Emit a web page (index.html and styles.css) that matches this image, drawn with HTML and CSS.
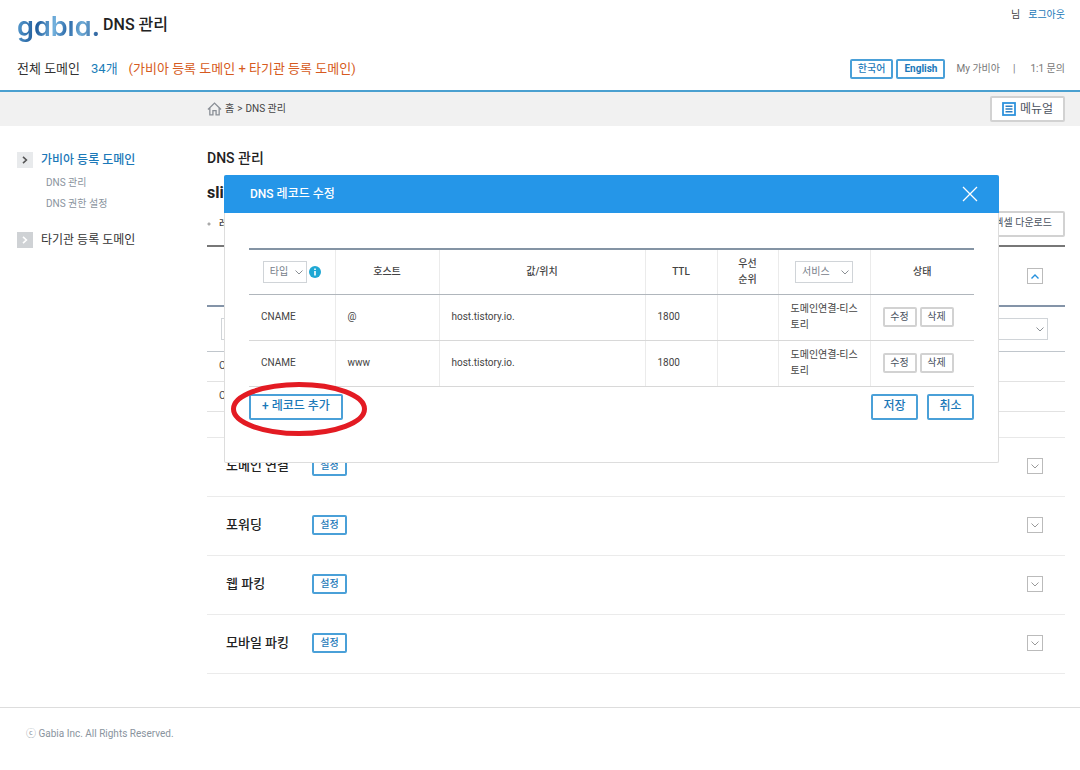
FILE: index.html
```html
<!DOCTYPE html>
<html lang="ko">
<head>
  <meta charset="UTF-8" />
  <meta name="viewport" content="width=device-width, initial-scale=1.0">
  <title>DNS 관리</title>
  <link rel="stylesheet" href="styles.css">
</head>
<body>

  <!-- Shared icons -->
  <svg class="icon-defs" aria-hidden="true">
    <symbol id="chevron-down" viewBox="0 0 8 5"><path d="M0.5 0.5 L4 4 L7.5 0.5" fill="none" stroke="currentColor" /></symbol>
    <symbol id="chevron-up" viewBox="0 0 8 5"><path d="M0.5 4.5 L4 1 L7.5 4.5" fill="none" stroke="currentColor" stroke-width="1.4" /></symbol>
    <symbol id="chevron-right" viewBox="0 0 6 8"><path d="M1 0.8 L4.4 4 L1 7.2" fill="none" stroke="currentColor" stroke-width="1.6" /></symbol>
  </svg>

  <header id="header">
    <div class="header-row header-top">
      <div class="brand">
        <a class="logo" href="#" aria-label="gabia">gabıa.</a>
        <h1>DNS 관리</h1>
      </div>
      <div class="user">
        <span>님</span>
        <a href="#">로그아웃</a>
      </div>
    </div>
    <div class="header-row header-bottom">
      <p class="summary">
        <span>전체 도메인</span>
        <span class="count">34개</span>
        <span class="detail">(가비아 등록 도메인 + 타기관 등록 도메인)</span>
      </p>
      <div class="header-links">
        <button class="btn btn-blue btn-lang" type="button">한국어</button>
        <button class="btn btn-blue btn-lang" type="button"><b>English</b></button>
        <a href="#">My 가비아</a>
        <span class="divider">|</span>
        <a href="#">1:1 문의</a>
      </div>
    </div>
  </header>

  <div id="location">
    <nav class="breadcrumb">
      <svg width="15" height="14" viewBox="0 0 16 15"><path d="M1 8 L8 1.2 L15 8 M3 6.5 V13.8 H6.3 V9.3 H9.7 V13.8 H13 V6.5" fill="none" stroke="#8a8f96" stroke-width="1.4" /></svg>
      <a href="#">홈</a> &gt; <span>DNS 관리</span>
    </nav>
    <button class="btn btn-grey btn-manual" type="button">
      <svg width="14" height="14" viewBox="0 0 14 14"><rect x="1" y="1" width="12" height="12" fill="#fff" stroke="#2e93dd" stroke-width="1.8" /><path d="M3.5 4.3 H10.5 M3.5 7 H10.5 M3.5 9.7 H10.5" stroke="#2e7fc0" stroke-width="1.5" /></svg>
      메뉴얼
    </button>
  </div>

  <div id="page">
    <nav id="sidebar">
      <a class="menu active" href="#"><span class="arrow"><svg width="6" height="8"><use href="#chevron-right" /></svg></span>가비아 등록 도메인</a>
      <ul>
        <li><a href="#">DNS 관리</a></li>
        <li><a href="#">DNS 권한 설정</a></li>
      </ul>
      <a class="menu" href="#"><span class="arrow"><svg width="6" height="8"><use href="#chevron-right" /></svg></span>타기관 등록 도메인</a>
    </nav>

    <main id="content">
      <h2>DNS 관리</h2>
      <h3>sli</h3>
      <div class="record-bar">
        <p>레코드</p>
        <button class="btn btn-grey btn-excel" type="button">엑셀 다운로드</button>
      </div>

      <section class="records">
        <div class="records-head">
          <button class="toggle open" type="button" aria-label="접기"><svg width="8" height="5"><use href="#chevron-up" /></svg></button>
        </div>
        <div class="records-filter">
          <span class="select"><select aria-label="필터"><option></option></select><svg width="8" height="5"><use href="#chevron-down" /></svg></span>
        </div>
        <div class="records-row">CNAME</div>
        <div class="records-row">CNAME</div>
        <div class="records-end"></div>
      </section>

      <section class="item">
        <h4>도메인 연결</h4>
        <button class="btn btn-blue btn-set" type="button">설정</button>
        <button class="toggle" type="button" aria-label="펼치기"><svg width="8" height="5"><use href="#chevron-down" /></svg></button>
      </section>
      <section class="item">
        <h4>포워딩</h4>
        <button class="btn btn-blue btn-set" type="button">설정</button>
        <button class="toggle" type="button" aria-label="펼치기"><svg width="8" height="5"><use href="#chevron-down" /></svg></button>
      </section>
      <section class="item">
        <h4>웹 파킹</h4>
        <button class="btn btn-blue btn-set" type="button">설정</button>
        <button class="toggle" type="button" aria-label="펼치기"><svg width="8" height="5"><use href="#chevron-down" /></svg></button>
      </section>
      <section class="item">
        <h4>모바일 파킹</h4>
        <button class="btn btn-blue btn-set" type="button">설정</button>
        <button class="toggle" type="button" aria-label="펼치기"><svg width="8" height="5"><use href="#chevron-down" /></svg></button>
      </section>

      <!-- DNS record edit layer -->
      <div id="recordModal" role="dialog" aria-labelledby="modalTitle">
        <div class="modal-header">
          <h2 id="modalTitle">DNS 레코드 수정</h2>
          <button class="close" type="button" aria-label="닫기"><svg width="16" height="16" viewBox="0 0 16 16"><path d="M1 1 L15 15 M15 1 L1 15" stroke="#fff" stroke-width="1.3" /></svg></button>
        </div>
        <div class="modal-body">
          <table>
            <colgroup>
              <col class="col-type"><col class="col-host"><col><col class="col-ttl"><col class="col-prio"><col class="col-service"><col class="col-state">
            </colgroup>
            <thead>
              <tr>
                <th>
                  <div class="type-filter">
                    <span class="select"><select aria-label="타입"><option>타입</option></select><svg width="8" height="5"><use href="#chevron-down" /></svg></span>
                    <svg width="12" height="12" viewBox="0 0 12 12"><circle cx="6" cy="6" r="6" fill="#1fa8d4" /><path d="M6 2.4 V4 M6 5 V9.6" stroke="#fff" stroke-width="1.6" /></svg>
                  </div>
                </th>
                <th>호스트</th>
                <th>값/위치</th>
                <th>TTL</th>
                <th>우선<br>순위</th>
                <th><span class="select select-service"><select aria-label="서비스"><option>서비스</option></select><svg width="8" height="5"><use href="#chevron-down" /></svg></span></th>
                <th>상태</th>
              </tr>
            </thead>
            <tbody>
              <tr>
                <td>CNAME</td>
                <td>@</td>
                <td>host.tistory.io.</td>
                <td>1800</td>
                <td></td>
                <td>도메인연결-티스토리</td>
                <td><div class="actions"><button class="btn btn-grey" type="button">수정</button><button class="btn btn-grey" type="button">삭제</button></div></td>
              </tr>
              <tr>
                <td>CNAME</td>
                <td>www</td>
                <td>host.tistory.io.</td>
                <td>1800</td>
                <td></td>
                <td>도메인연결-티스토리</td>
                <td><div class="actions"><button class="btn btn-grey" type="button">수정</button><button class="btn btn-grey" type="button">삭제</button></div></td>
              </tr>
            </tbody>
          </table>
          <div class="modal-buttons">
            <div class="add-record">
              <button class="btn btn-blue btn-large" type="button">+ 레코드 추가</button>
              <svg class="mark" width="138" height="56" viewBox="0 0 138 56"><ellipse cx="69" cy="28" rx="65.5" ry="24.5" fill="none" stroke="#e31b23" stroke-width="5" /></svg>
            </div>
            <button class="btn btn-blue btn-large" type="button">저장</button>
            <button class="btn btn-blue btn-large" type="button">취소</button>
          </div>
        </div>
      </div>
    </main>
  </div>

  <footer id="footer">ⓒ Gabia Inc. All Rights Reserved.</footer>

</body>
</html>
```

FILE: styles.css
```css
* {
  box-sizing: border-box;
}

body {
  margin: 0;
  font-family: Roboto, "Noto Sans CJK KR", sans-serif;
  font-size: 10px;
  line-height: 16px;
  color: #444;
  background: #fff;
}

h1, h2, h3, h4, p, ul {
  margin: 0;
  padding: 0;
}

ul {
  list-style: none;
}

a {
  color: inherit;
  text-decoration: none;
}

button, select {
  font: inherit;
  color: inherit;
  cursor: pointer;
}

.icon-defs {
  display: none;
}

/* Buttons */
.btn {
  height: 20px;
  padding: 0 7px 2px;
  line-height: 16px;
  background: #fff;
  border-radius: 2px;
}

.btn-blue {
  color: #1b78b8;
  font-weight: 500;
  border: 2px solid #4aa0d8;
}

.btn-grey {
  color: #4a5260;
  border: 2px solid #d2d2d2;
}

.btn-set {
  width: 35px;
  padding: 0 0 2px;
}

.btn-large {
  height: 26px;
  padding: 0 11px 2px;
  font-size: 12px;
}

/* Header */
#header {
  height: 92px;
  padding: 0 15px 0 17px;
  border-bottom: 2px solid #4aa0d0;
}

.header-row {
  display: flex;
  justify-content: space-between;
}

.header-top {
  height: 56px;
  padding-top: 7px;
}

.brand {
  display: flex;
  gap: 3px;
}

.logo {
  height: 44px;
  font-family: Inter, Lato, sans-serif;
  font-feature-settings: "cv11";
  font-size: 27px;
  font-weight: 600;
  line-height: 40px;
  color: transparent;
  background: linear-gradient(100deg, #5fa3d4, #1f5c9c 25%, #74b2de 45%, #2a68a8 60%, #6fabd6 75%, #1c4f8f);
  -webkit-background-clip: text;
  background-clip: text;
}

h1 {
  font-size: 16px;
  font-weight: 500;
  line-height: 36px;
  color: #222;
}

.user {
  display: flex;
  gap: 8px;
}

.user a {
  color: #1b78b8;
}

.header-bottom {
  align-items: center;
  height: 26px;
}

.summary {
  display: flex;
  gap: 11px;
  font-size: 13px;
  color: #333;
}

.summary .count {
  color: #1b7db8;
}

.summary .detail {
  color: #d65a20;
}

.header-links {
  display: flex;
  align-items: center;
  gap: 3px;
  color: #777;
}

.btn-lang {
  padding: 0 6px 2px;
}

.header-links a {
  margin-left: 8px;
}

.header-links .divider {
  margin: 0 4px 0 10px;
}

/* Location bar */
#location {
  display: flex;
  align-items: center;
  justify-content: space-between;
  height: 34px;
  padding: 0 15px 0 207px;
  background: #f1f1f1;
}

.breadcrumb {
  display: flex;
  align-items: center;
  gap: 3px;
}

.btn-manual {
  display: flex;
  align-items: center;
  gap: 4px;
  height: 26px;
  padding: 0 10px;
  font-size: 12px;
}

/* Page */
#page {
  display: flex;
  padding: 22px 15px 0 17px;
}

#sidebar {
  flex: 0 0 190px;
  padding-top: 3px;
}

.menu {
  display: flex;
  align-items: center;
  gap: 8px;
  height: 18px;
  font-size: 12px;
  color: #333;
}

.menu.active {
  font-weight: 500;
  color: #1b78b8;
}

.arrow {
  display: flex;
  align-items: center;
  justify-content: center;
  width: 16px;
  height: 16px;
  color: #fff;
  background: #cfd2d5;
}

.active .arrow {
  color: #555;
  background: #e8eaec;
}

#sidebar ul {
  padding: 3px 0 17px 29px;
  line-height: 21px;
  color: #8a949e;
}

#content {
  position: relative;
  flex: 1;
}

#content h2 {
  font-size: 14px;
  font-weight: 500;
  line-height: 20px;
  color: #222;
}

#content h3 {
  margin-top: 15px;
  font-size: 16px;
  font-weight: 700;
  line-height: 20px;
  color: #222;
}

.record-bar {
  display: flex;
  align-items: center;
  justify-content: space-between;
  height: 44px;
  border-bottom: 2px solid #777;
}

.record-bar p {
  padding-left: 12px;
  font-weight: 500;
  background: radial-gradient(circle, #aaa 1px, transparent 2px) 0 center / 4px 4px no-repeat;
}

.btn-excel {
  height: 26px;
  padding: 0 11px 2px;
}

.toggle {
  display: flex;
  align-items: center;
  justify-content: center;
  width: 16px;
  height: 16px;
  margin-left: auto;
  padding: 0;
  color: #999;
  background: #fff;
  border: 1px solid #bbb;
}

.toggle.open {
  color: #2590dd;
}

.records-head {
  display: flex;
  align-items: center;
  height: 60px;
  padding-right: 22px;
  border-bottom: 2px solid #8494a8;
}

.records-filter {
  display: flex;
  align-items: center;
  height: 45px;
  padding: 0 17px 0 14px;
  border-bottom: 1px solid #c0c6cc;
}

.records-filter .select {
  width: 100%;
}

.records-row {
  height: 30px;
  padding-left: 12px;
  line-height: 28px;
  border-bottom: 1px solid #e2e2e2;
}

.records-end {
  height: 26px;
  border-bottom: 1px solid #e8e8e8;
}

.item {
  display: flex;
  align-items: center;
  height: 59px;
  padding: 0 22px 2px 19px;
  border-bottom: 1px solid #ebebeb;
}

.item h4 {
  min-width: 86px;
  font-size: 13px;
  font-weight: 500;
  color: #222;
}

.select {
  position: relative;
  display: inline-block;
  vertical-align: middle;
}

.select select {
  display: block;
  width: 100%;
  height: 22px;
  padding: 0 6px;
  line-height: 16px;
  font-weight: 400;
  color: #77808a;
  background: #fff;
  border: 1px solid #d0d4d8;
  border-radius: 0;
  appearance: none;
}

.select svg {
  position: absolute;
  top: 9px;
  right: 4px;
  color: #8a8f94;
  pointer-events: none;
}

/* Record edit layer */
#recordModal {
  position: absolute;
  top: 27px;
  left: 17px;
  right: 66px;
  background: #fff;
  border: 1px solid #ddd;
  border-top: 0;
  border-radius: 2px;
}

.modal-header {
  display: flex;
  align-items: center;
  justify-content: space-between;
  height: 38px;
  margin: 0 -1px;
  padding: 0 21px 0 26px;
  background: #2596e8;
  border-radius: 2px 2px 0 0;
}

#content .modal-header h2 {
  font-size: 12px;
  color: #fff;
}

.close {
  display: flex;
  padding: 0;
  background: none;
  border: 0;
}

.modal-body {
  padding: 35px 24px 42px;
}

table {
  width: 100%;
  table-layout: fixed;
  border-collapse: collapse;
  border-top: 2px solid #8494a4;
}

.col-type { width: 86px; }
.col-host { width: 104px; }
.col-ttl { width: 72px; }
.col-prio { width: 61px; }
.col-service { width: 92px; }
.col-state { width: 104px; }

th, td {
  border-left: 1px solid #ebebeb;
  border-bottom: 1px solid #d8d8d8;
}

th:first-child, td:first-child {
  border-left: 0;
}

th {
  height: 45px;
  padding: 0;
  font-weight: 500;
  border-bottom-color: #b0b6bc;
}

td {
  height: 46px;
  padding: 0 8px 0 12px;
  word-break: break-all;
}

.type-filter {
  display: flex;
  align-items: center;
  justify-content: center;
  gap: 2px;
}

.type-filter .select {
  width: 44px;
}

.select-service {
  width: 58px;
}

.actions {
  display: flex;
  gap: 3px;
}

.actions .btn {
  width: 34px;
  padding: 0 0 2px;
}

.modal-buttons {
  display: flex;
  gap: 9px;
  margin-top: 7px;
}

.modal-buttons > .btn {
  width: 47px;
  padding: 0 0 2px;
}

.add-record {
  position: relative;
  margin-right: auto;
}

/* Red circle over the add button */
.mark {
  position: absolute;
  top: -13px;
  left: -19px;
  pointer-events: none;
}

#footer {
  margin-top: 33px;
  padding: 18px 26px 28px;
  color: #8a949e;
  border-top: 1px solid #ddd;
}
```
